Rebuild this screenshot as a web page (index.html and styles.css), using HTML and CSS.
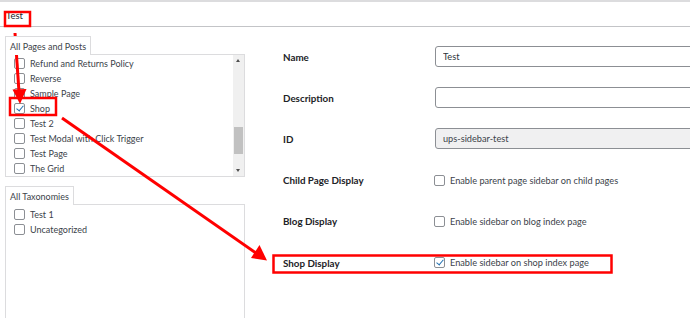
FILE: index.html
```html
<!DOCTYPE html>
<html lang="en">
<head>
  <meta charset="UTF-8" />
  <meta name="viewport" content="width=device-width, initial-scale=1" />
  <title>Edit Sidebar</title>
  <link rel="stylesheet" href="styles.css">
</head>

<body>
  <div class="page">
    <div class="topbar"></div>
    <div class="title">Test</div>

    <div class="main">
      <!-- Where the sidebar shows -->
      <aside class="sidebar">
        <div class="tab">All Pages and Posts</div>
        <div class="listbox pages">
          <div class="list">
            <label class="item"><input type="checkbox"> Refund and Returns Policy</label>
            <label class="item"><input type="checkbox"> Reverse</label>
            <label class="item"><input type="checkbox"> Sample Page</label>
            <label class="item"><input type="checkbox" checked> Shop</label>
            <label class="item"><input type="checkbox"> Test 2</label>
            <label class="item"><input type="checkbox"> Test Modal with Click Trigger</label>
            <label class="item"><input type="checkbox"> Test Page</label>
            <label class="item"><input type="checkbox"> The Grid</label>
            <label class="item"><input type="checkbox"></label>
          </div>
          <div class="scrollbar">
            <span class="arrow up"></span>
            <div class="track"><div class="thumb"></div></div>
            <span class="arrow down"></span>
          </div>
        </div>

        <div class="tab tab-tax">All Taxonomies</div>
        <div class="listbox tax">
          <label class="item"><input type="checkbox"> Test 1</label>
          <label class="item"><input type="checkbox"> Uncategorized</label>
        </div>
      </aside>

      <!-- Sidebar settings -->
      <section class="form">
        <div class="label">Name</div>
        <div class="field"><input class="text" type="text" value="Test"></div>

        <div class="label">Description</div>
        <div class="field"><input class="text" type="text" value=""></div>

        <div class="label">ID</div>
        <div class="field"><input class="text readonly" type="text" value="ups-sidebar-test" readonly></div>

        <div class="label">Child Page Display</div>
        <div class="field"><label class="check"><input type="checkbox"> Enable parent page sidebar on child pages</label></div>

        <div class="label">Blog Display</div>
        <div class="field"><label class="check"><input type="checkbox"> Enable sidebar on blog index page</label></div>

        <div class="label">Shop Display</div>
        <div class="field"><label class="check"><input type="checkbox" checked> Enable sidebar on shop index page</label></div>
      </section>
    </div>

    <!-- Annotation layer -->
    <svg class="notes" width="690" height="318" viewBox="0 0 690 318">
      <g fill="none" stroke="#f00" stroke-width="2.5">
        <rect x="5" y="12" width="25" height="14" />
        <rect x="10" y="98" width="46" height="17" />
        <rect x="273.5" y="255.5" width="338" height="17" />
        <line x1="15" y1="33" x2="19" y2="92" stroke-width="3" />
        <line x1="62" y1="118" x2="256" y2="253" stroke-width="3" />
      </g>
      <g fill="#f00">
        <polygon points="20,104 12.5,89.5 26.5,89" />
        <polygon points="267,260.5 251,258 259.5,245" />
      </g>
    </svg>
  </div>
</body>
</html>
```

FILE: styles.css
```css
* {
  box-sizing: border-box;
}

body {
  margin: 0;
  background: #fff;
  color: #3c434a;
  font-family: Lato, "Liberation Sans", sans-serif;
  font-size: 9px;
}

.page {
  position: relative;
  width: 690px;
  height: 318px;
  overflow: hidden;
}

.topbar {
  height: 2px;
  background: #dcdcde;
}

.title {
  height: 25px;
  padding: 8px 0 0 6px;
  border-bottom: 1px solid #c3c4c7;
  color: #1d2327;
  font-size: 9.5px;
}

.main {
  display: flex;
}

/* === Left column: pages and taxonomies === */
.sidebar {
  display: flex;
  flex-direction: column;
  align-items: flex-start;
  width: 240px;
  margin-left: 5px;
  padding-top: 9px;
}

.tab {
  position: relative;
  z-index: 1;
  height: 19px;
  margin-bottom: -1px;
  padding: 4px 4px 0;
  border: 1px solid #dcdcde;
  border-bottom: none;
  background: #fff;
  white-space: nowrap;
}

.tab-tax {
  margin-top: 9px;
}

.listbox {
  align-self: stretch;
  border: 1px solid #dcdcde;
  background: #fff;
}

.listbox.pages {
  display: flex;
  height: 123px;
}

.list {
  flex: 1;
  overflow: hidden;
  padding: 1px 0 0 8px;
}

.listbox.tax {
  height: 200px;
  padding: 2px 0 0 8px;
}

.item {
  display: flex;
  align-items: center;
  gap: 5px;
  height: 15px;
  white-space: nowrap;
}

/* === Checkboxes === */
input[type="checkbox"] {
  appearance: none;
  position: relative;
  flex: none;
  width: 11px;
  height: 11px;
  margin: 0;
  border: 1px solid #8c8f94;
  border-radius: 2px;
  background: #fff;
}

input[type="checkbox"]:checked::before {
  content: "";
  position: absolute;
  left: 3px;
  top: 0px;
  width: 3px;
  height: 6px;
  border-right: 1.5px solid #2271b1;
  border-bottom: 1.5px solid #2271b1;
  transform: rotate(40deg);
}

/* === Fake scrollbar === */
.scrollbar {
  display: flex;
  flex-direction: column;
  width: 11px;
  background: #f0f0f0;
}

.arrow {
  display: block;
  height: 11px;
  position: relative;
}

.arrow::before {
  content: "";
  position: absolute;
  left: 3px;
  top: 4px;
  border-left: 2.5px solid transparent;
  border-right: 2.5px solid transparent;
}

.arrow.up::before {
  border-bottom: 3px solid #505050;
}

.arrow.down::before {
  border-top: 3px solid #505050;
}

.track {
  flex: 1;
  padding: 61px 1px 0;
}

.thumb {
  height: 27px;
  background: #c1c1c1;
}

/* === Right column: settings === */
.form {
  flex: 1;
  display: grid;
  grid-template-columns: 152px 1fr;
  grid-auto-rows: 41.2px;
  align-items: center;
  padding: 9px 0 0 38px;
}

.label {
  color: #1d2327;
  font-weight: 700;
  font-size: 9.8px;
}

.field {
  min-width: 0;
}

.text {
  display: block;
  width: 300px;
  height: 21px;
  padding: 0 7px;
  border: 1px solid #8c8f94;
  border-radius: 3px;
  background: #fff;
  color: #2c3338;
  font-family: inherit;
  font-size: 9.2px;
}

.text.readonly {
  background: #f0f0f1;
  color: #3c434a;
}

.check {
  display: flex;
  align-items: center;
  gap: 5px;
  margin-left: -1px;
  font-size: 9.2px;
  white-space: nowrap;
}

/* === Red annotation marks on top === */
.notes {
  position: absolute;
  top: 0;
  left: 0;
  pointer-events: none;
}
```
